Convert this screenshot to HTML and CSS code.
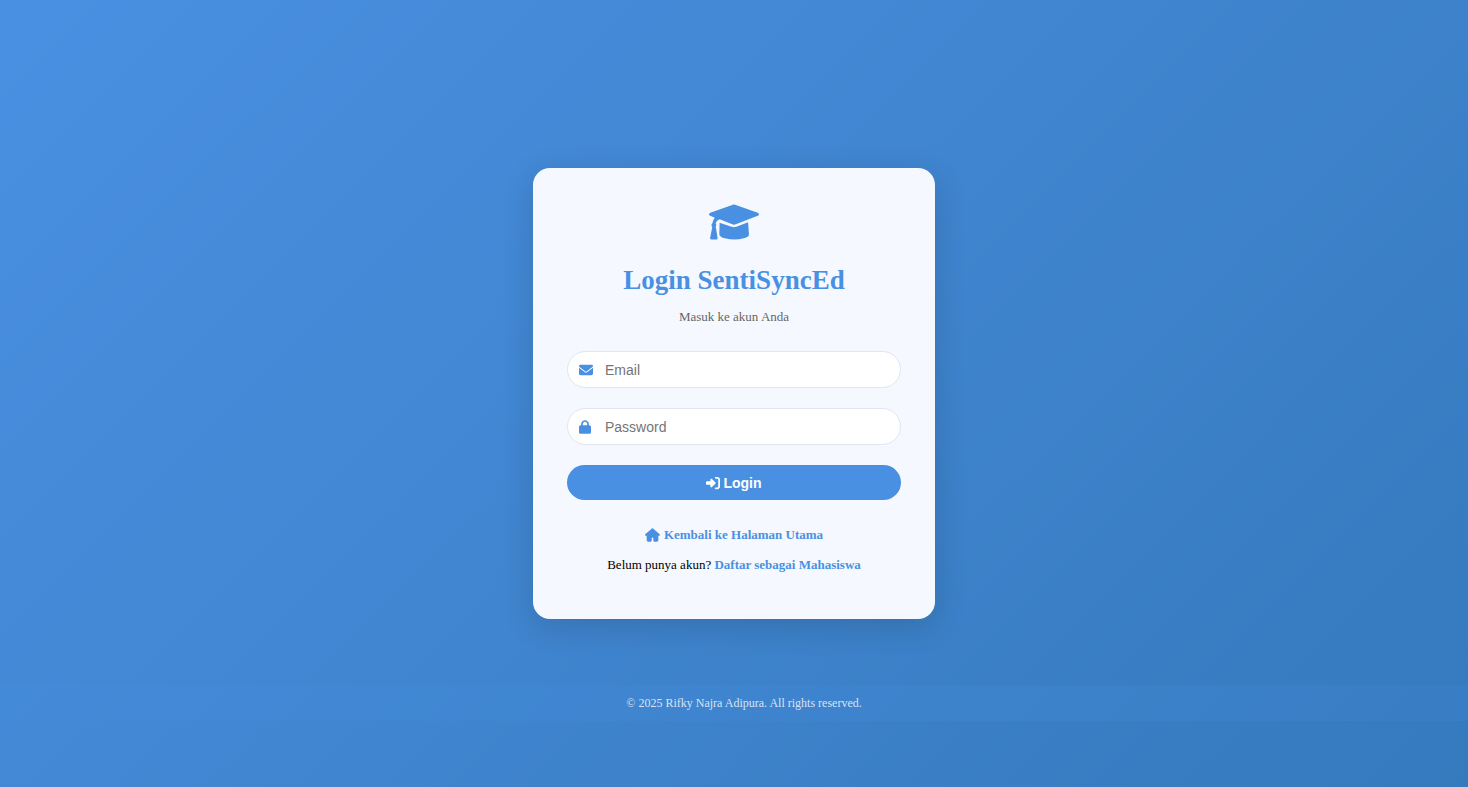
FILE: index.html
```html
<!DOCTYPE html>
<html lang="id">
<head>
<meta charset="utf-8">
<meta name="viewport" content="width=device-width, initial-scale=1">
<title>Login SentiSyncEd</title>
<link rel="stylesheet" href="styles.css">
</head>
<body>
<main class="card">
  <svg class="logo" viewBox="0 0 640 512" aria-hidden="true"><path d="M306 36q14-5 28 0L624 137q16 6 16 20t-16 20L343 286q-23 9-46 0L136 222q-38 14-52 50 12 8 8 26l-6 12 24 150q2 20-14 20H28q-16 0-14-18l28-142-10-14q-4-22 10-32 6-40 32-72L16 177Q0 171 0 157t16-20ZM136 267l152 50q32 12 64 0l148-58 12 156q-4 31-66 50-116 33-244 0-62-18-70-50Z"/></svg>
  <h1 class="title">Login SentiSyncEd</h1>
  <p class="subtitle">Masuk ke akun Anda</p>
  <form class="form">
    <label class="field">
      <svg class="field-icon" viewBox="0 0 512 512" aria-hidden="true"><path d="M48 64C21.500 64 0 85.500 0 112c0 15.100 7.100 29.300 19.200 38.400L236.800 313.600c11.400 8.500 27 8.500 38.400 0L492.800 150.400c12.100-9.100 19.200-23.300 19.200-38.400c0-26.500-21.500-48-48-48H48zM0 176V384c0 35.300 28.700 64 64 64H448c35.300 0 64-28.700 64-64V176L294.400 339.200c-22.800 17.100-54 17.100-76.800 0L0 176z"/></svg>
      <input class="input" type="email" placeholder="Email" aria-label="Email">
    </label>
    <label class="field">
      <svg class="field-icon field-icon-lock" viewBox="0 0 448 512" aria-hidden="true"><path d="M144 144v48H304V144c0-44.200-35.800-80-80-80s-80 35.800-80 80zM80 192V144C80 64.500 144.500 0 224 0s144 64.500 144 144v48h16c35.300 0 64 28.700 64 64V448c0 35.300-28.700 64-64 64H64c-35.300 0-64-28.700-64-64V256c0-35.300 28.700-64 64-64H80z"/></svg>
      <input class="input" type="password" placeholder="Password" aria-label="Password">
    </label>
    <button class="submit" type="submit">
      <svg class="submit-icon" viewBox="0 0 512 512" aria-hidden="true"><path d="M217.900 105.900L340.700 228.700c7.200 7.200 11.300 17.100 11.300 27.300s-4.100 20.100-11.300 27.300L217.900 406.100c-6.400 6.400-15 9.900-24 9.900c-18.700 0-33.900-15.200-33.900-33.900l0-62.100L32 320c-17.700 0-32-14.300-32-32l0-64c0-17.700 14.300-32 32-32l128 0 0-62.100c0-18.700 15.200-33.900 33.900-33.900c9 0 17.600 3.600 24 9.900zM352 416l64 0c17.700 0 32-14.300 32-32l0-256c0-17.700-14.300-32-32-32l-64 0c-17.700 0-32-14.300-32-32s14.300-32 32-32l64 0c53 0 96 43 96 96l0 256c0 53-43 96-96 96l-64 0c-17.700 0-32-14.300-32-32s14.300-32 32-32z"/></svg>
      Login
    </button>
  </form>
  <nav class="links">
    <a class="link home" href="#"><svg class="home-icon" viewBox="0 0 576 512" aria-hidden="true"><path d="M575.800 255.500c0 18-15 32.100-32 32.100h-32l.7 160.200c0 35.300-28 64.200-64 64.200H352c-17.700 0-32-14.300-32-32V384c0-17.700-14.300-32-32-32s-32 14.300-32 32v96c0 17.700-14.300 32-32 32H128c-35.300 0-64-28.700-64-64V287.600H32c-18 0-32-14-32-32.100c0-9 3-17 10-24L266.400 8c7-7 15-8 22-8s15 2 21 7L564.800 231.500c8 7 12 15 11 24z"/></svg>Kembali ke Halaman Utama</a>
    <p class="register">Belum punya akun? <a class="link" href="#">Daftar sebagai Mahasiswa</a></p>
  </nav>
</main>
<footer class="footer">© 2025 Rifky Najra Adipura. All rights reserved.</footer>
</body>
</html>
```
FILE: styles.css
```css
* {
  box-sizing: border-box;
}

body {
  margin: 0;
  min-height: 100vh;
  display: grid;
  grid-template-rows: 1fr auto 1fr;
  background: linear-gradient(135deg, #4a90e2, #357abd);
  font-family: "Liberation Serif", "Times New Roman", serif;
  font-size: 13px;
  line-height: 16px;
  color: #000;
}

.card {
  grid-row: 2;
  justify-self: center;
  width: 100%;
  max-width: 402px;
  padding: 34px 34px 46px;
  border-radius: 17px;
  background: #f5f9ff;
  box-shadow: 0 8px 32px rgba(0, 0, 0, 0.15);
  text-align: center;
}

.logo {
  display: block;
  width: 50px;
  height: 40px;
  margin: 0 auto 22px;
  fill: #4a90e2;
}

.title {
  margin: 0 0 13px;
  font-size: 27px;
  line-height: 32px;
  color: #4a90e2;
}

.subtitle {
  margin: 0 0 26px;
  color: #666;
}

.form {
  display: grid;
  gap: 20px;
}

.field {
  display: flex;
  align-items: center;
  gap: 12px;
  height: 37px;
  padding: 0 12px 0 11px;
  border: 1px solid #e1e5ee;
  border-radius: 20px;
  background: #fff;
}

.field-icon {
  flex: none;
  width: 14px;
  height: 14px;
  fill: #4a90e2;
}

.field-icon-lock {
  width: 12px;
  margin-right: 2px;
}

.input {
  flex: 1;
  min-width: 0;
  padding: 0;
  border: 0;
  outline: 0;
  background: none;
  font: 14px "Liberation Sans", Arial, sans-serif;
}

.input::placeholder {
  color: #757575;
}

.submit {
  display: flex;
  align-items: center;
  justify-content: center;
  gap: 3px;
  height: 35px;
  border: 0;
  border-radius: 20px;
  background: #4a90e2;
  color: #fff;
  font: bold 14px "Liberation Sans", Arial, sans-serif;
}

.submit-icon {
  width: 14px;
  height: 14px;
  fill: currentColor;
}

.links {
  display: grid;
  gap: 14px;
  margin-top: 27px;
}

.link {
  color: #4a90e2;
  font-weight: bold;
  text-decoration: none;
}

.home {
  display: flex;
  align-items: center;
  justify-content: center;
  gap: 4px;
}

.home-icon {
  width: 15px;
  height: 14px;
  fill: currentColor;
}

.register {
  margin: 0;
}

.footer {
  grid-row: 3;
  align-self: start;
  margin-top: 66px;
  padding: 10px 0 10px 20px;
  background: rgba(74, 144, 226, 0.18);
  color: rgba(255, 255, 255, 0.8);
  font-size: 12px;
  text-align: center;
}
```
